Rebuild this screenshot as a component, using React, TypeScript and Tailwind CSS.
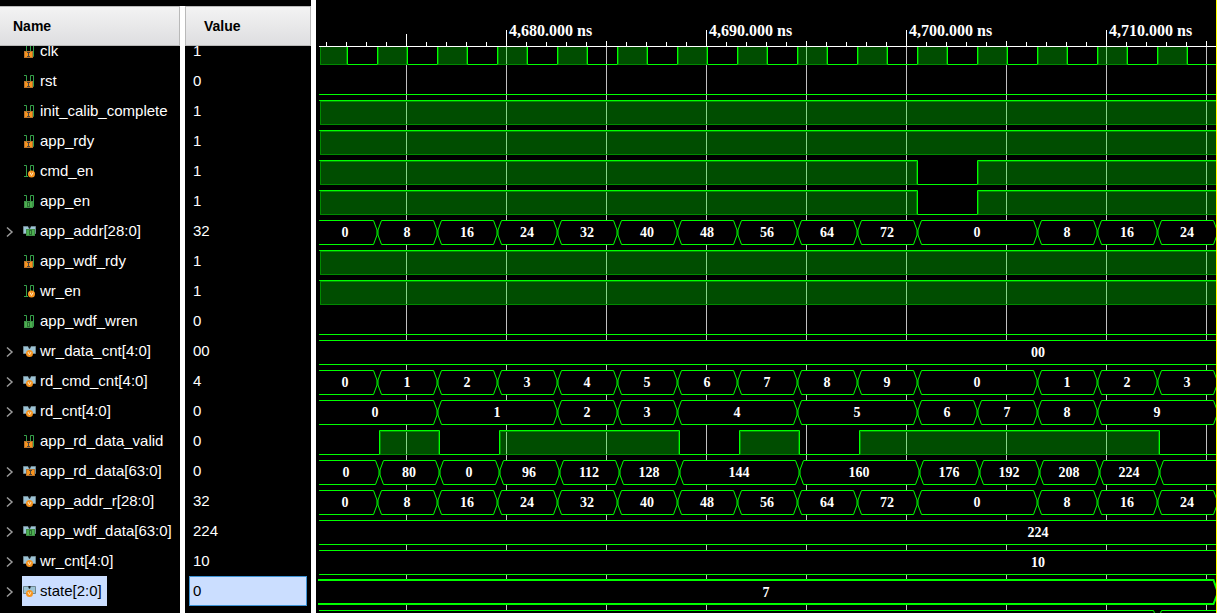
import React from 'react';
import clsx from 'clsx';

type Badge = 'in' | 'out' | 'var';

type Segment = { from: number; to: number; text?: string };

type Wave =
  | { kind: 'bit'; highs: [number, number][] }
  | { kind: 'bus'; segments: Segment[] };

type Signal = {
  name: string;
  value: string;
  badge: Badge;
  wave: Wave;
  selected?: boolean;
};

const ROW = 30;
const FIRST_ROW = 36;
const AXIS_Y = 46;
const START = -3;
const END = 901;
const PAST_END = 1000;

const bit = (...highs: [number, number][]): Wave => ({ kind: 'bit', highs });

// Pairs each label with the two boundaries around it
const bus = (edges: number[], labels: string[]): Wave => ({
  kind: 'bus',
  segments: labels.map((text, i) => ({ from: edges[i], to: edges[i + 1], text })),
});

const steady = (text: string): Wave => bus([-556, 2000], [text]);

const ALWAYS_HIGH = bit([4, PAST_END]);
const ENABLE = bit([4, 601], [661, PAST_END]);
const CLOCK = bit([4, 31], ...Array.from({ length: 14 }, (_, i): [number, number] => [61 + i * 60, 91 + i * 60]));

const CMD_EDGES = [START, 61, 121, 181, 241, 301, 361, 421, 481, 541, 601, 721, 781, 841, END];
const ADDR = bus(CMD_EDGES, ['0', '8', '16', '24', '32', '40', '48', '56', '64', '72', '0', '8', '16', '24']);
const CMD_CNT = bus(CMD_EDGES, ['0', '1', '2', '3', '4', '5', '6', '7', '8', '9', '0', '1', '2', '3']);
const RD_CNT = bus(
  [START, 121, 241, 301, 361, 481, 601, 661, 721, 781, END],
  ['0', '1', '2', '3', '4', '5', '6', '7', '8', '9']
);
const RD_DATA = bus(
  [START, 63, 123, 183, 243, 303, 363, 483, 603, 663, 723, 783, 843, 2000],
  ['0', '80', '0', '96', '112', '128', '144', '160', '176', '192', '208', '224', '']
);

const signals: Signal[] = [
  { name: 'clk', value: '1', badge: 'in', wave: CLOCK },
  { name: 'rst', value: '0', badge: 'in', wave: bit() },
  { name: 'init_calib_complete', value: '1', badge: 'in', wave: ALWAYS_HIGH },
  { name: 'app_rdy', value: '1', badge: 'in', wave: ALWAYS_HIGH },
  { name: 'cmd_en', value: '1', badge: 'var', wave: ENABLE },
  { name: 'app_en', value: '1', badge: 'out', wave: ENABLE },
  { name: 'app_addr[28:0]', value: '32', badge: 'out', wave: ADDR },
  { name: 'app_wdf_rdy', value: '1', badge: 'in', wave: ALWAYS_HIGH },
  { name: 'wr_en', value: '1', badge: 'var', wave: ALWAYS_HIGH },
  { name: 'app_wdf_wren', value: '0', badge: 'out', wave: bit() },
  { name: 'wr_data_cnt[4:0]', value: '00', badge: 'var', wave: steady('00') },
  { name: 'rd_cmd_cnt[4:0]', value: '4', badge: 'var', wave: CMD_CNT },
  { name: 'rd_cnt[4:0]', value: '0', badge: 'var', wave: RD_CNT },
  { name: 'app_rd_data_valid', value: '0', badge: 'in', wave: bit([63, 123], [183, 363], [423, 483], [543, 843]) },
  { name: 'app_rd_data[63:0]', value: '0', badge: 'in', wave: RD_DATA },
  { name: 'app_addr_r[28:0]', value: '32', badge: 'var', wave: ADDR },
  { name: 'app_wdf_data[63:0]', value: '224', badge: 'out', wave: steady('224') },
  { name: 'wr_cnt[4:0]', value: '10', badge: 'var', wave: steady('10') },
  { name: 'state[2:0]', value: '0', badge: 'var', wave: bus([-1, END], ['7']), selected: true },
];

// Only the top edge of this row is in view
const NEXT_ROW: Segment[] = [
  { from: -400, to: 841 },
  { from: 841, to: 2000 },
];

const SignalIcon: React.FC<{ isBus: boolean; badge: Badge }> = ({ isBus, badge }) => {
  // Top left corner of the square badge
  const x = isBus ? 3 : 1;
  const y = isBus ? 5 : 7;
  return (
    <svg width="14" height="14" viewBox="0 0 14 14" className="shrink-0" aria-hidden="true">
      {isBus ? (
        <>
          <path d="M0.5 2.5H5L6.5 5L8 2.5H12.5V9.5H0.5Z" fill="#9cc3d5" stroke="#6f8791" />
          <path d="M5 2H8L6.5 5Z" fill="#10181c" />
        </>
      ) : (
        <path d="M1 1.5H3.5V12.5M1 12.5H5M7.5 1.5H10.5V12.5H7.5Z" fill="none" stroke="#35a049" />
      )}
      {badge === 'var' && (
        <>
          <circle cx={isBus ? 6.5 : 8.5} cy={isBus ? 9.5 : 10} r="3.5" fill="#f7941e" />
          <path d={isBus ? 'M5 8l1.5 3L8 8' : 'M7 8.5l1.5 3 1.5-3'} fill="none" stroke="#ffe2b8" />
        </>
      )}
      {badge === 'in' && (
        <>
          <rect x={x} y={y} width="9" height="7" fill="#b8752f" />
          <rect x={x + 1} y={y + 1} width="7" height="5" fill="#f7941e" />
          <path d={`M${x + 3} ${y + 1.5}h3M${x + 4.5} ${y + 1}v5M${x + 3} ${y + 5.5}h3`} fill="none" stroke="#4f4338" />
        </>
      )}
      {badge === 'out' && (
        <>
          <rect x={x} y={y} width="9" height="7" fill="#3f8f46" />
          <rect x={x + 1} y={y + 1} width="7" height="5" fill="#4caf50" />
          <rect x={x + 3.5} y={y + 1.5} width="2" height="4" fill="none" stroke="#2a6a31" />
        </>
      )}
    </svg>
  );
};

const NameRow: React.FC<{ signal: Signal }> = ({ signal }) => {
  const isBus = signal.wave.kind === 'bus';
  return (
    <li className="flex h-[30px] items-stretch">
      <span className="flex w-[22px] shrink-0">
        {isBus && (
          <button type="button" aria-label={`Expand ${signal.name}`} className="flex w-full items-center pt-[2px] pl-[6px]">
            <svg width="8" height="12" viewBox="0 0 8 12" fill="none" stroke="#9a9a9a" strokeWidth="1.5">
              <path d="M1 1.5L6 6L1 10.5" />
            </svg>
          </button>
        )}
      </span>
      <span
        className={clsx(
          'flex items-center gap-[3px] pr-[5px] pl-px whitespace-nowrap',
          signal.selected ? 'bg-[#cbdeff] text-black' : 'text-white'
        )}
      >
        <SignalIcon isBus={isBus} badge={signal.badge} />
        {signal.name}
      </span>
    </li>
  );
};

const ValueRow: React.FC<{ signal: Signal }> = ({ signal }) => (
  <li
    className={clsx(
      'mx-1 flex h-[30px] items-center border pl-[3px]',
      signal.selected ? 'border-[#3d92d4] bg-[#cbdeff] text-black' : 'border-transparent text-white'
    )}
  >
    {signal.value}
  </li>
);

const Column: React.FC<{ title: string; className: string; titleClass: string; children: React.ReactNode }> = ({
  title,
  className,
  titleClass,
  children,
}) => (
  <section className={clsx('flex shrink-0 flex-col', className)}>
    <h2
      className={clsx(
        'z-10 flex h-10 shrink-0 items-center border-t border-r border-b border-[#b9b9b9] bg-linear-to-b from-[#f3f3f3] to-[#dedee0] text-[14px] font-bold text-black',
        titleClass
      )}
    >
      {title}
    </h2>
    <ul className="-mt-[10px] text-[15px] leading-[18px]">{children}</ul>
  </section>
);

const BitWave: React.FC<{ highs: [number, number][] }> = ({ highs }) => {
  let line = 'M3 28.5';
  highs.forEach(([from, to]) => {
    line += from === 4 ? 'M3 4.5' : `H${from + 0.5}V4.5`;
    line += `H${to + 0.5}V28.5`;
  });
  line += `H${PAST_END}`;
  return (
    <>
      {highs.map(([from, to]) => {
        const left = from === 4 ? 4 : from + 1;
        return (
          <rect
            key={from}
            x={left + 0.5}
            y="5.5"
            width={to - left - 1}
            height="23"
            fill="#00ff00"
            fillOpacity="0.3"
            stroke="#008a00"
          />
        );
      })}
      <path d={line} fill="none" stroke="#00ff00" />
    </>
  );
};

const BusWave: React.FC<{ segments: Segment[]; thick?: boolean }> = ({ segments, thick }) => (
  <>
    {segments.map(({ from, to, text }) => {
      const open = from < 0;
      const left = open ? (thick ? 2 : 3) : from;
      const top = thick ? 4 : 4.5;
      const bottom = thick ? 28 : 28.5;
      const right = `H${to - 3.5}L${to} 14V19L${to - 3.5} ${bottom}`;
      const d = open
        ? `M${left} ${top}${right}H${left}`
        : `M${left + 4.5} ${top}${right}H${left + 4.5}L${left + 1} 19V14Z`;
      return (
        <g key={from}>
          <path d={d} fill="#000000" stroke="#00ff00" strokeWidth={thick ? 2 : 1} />
          {text && (
            <text x={(from + to) / 2} y="21" textAnchor="middle" className="fill-white text-[14px] font-bold">
              {text}
            </text>
          )}
        </g>
      );
    })}
  </>
);

const WavePanel: React.FC = () => {
  const ticks = Array.from({ length: 45 }, (_, i) => 10 + i * 20);
  const gridLines = ticks.filter((x) => (x - 90) % 100 === 0);
  const labels = ['4,680.000 ns', '4,690.000 ns', '4,700.000 ns', '4,710.000 ns'];

  const tickTop = (x: number) => {
    if (x === 90) return 34;
    if ((x - 190) % 200 === 0) return 30;
    return (x - 90) % 100 === 0 ? 41 : 42;
  };

  return (
    <section className="relative min-w-0 flex-1 overflow-hidden bg-black">
      <svg width="100%" height="640" className="block font-['Liberation_Serif',serif]" role="img" aria-label="Waveforms">
        {gridLines.map((x) => (
          <rect key={x} x={x} y={AXIS_Y} width="1" height="594" fill="#c0c0c0" />
        ))}

        {signals.map(({ name, wave, selected }, i) => (
          <g key={name} transform={`translate(0 ${FIRST_ROW + i * ROW})`}>
            {wave.kind === 'bit' ? (
              <BitWave highs={wave.highs} />
            ) : (
              <BusWave segments={wave.segments} thick={selected} />
            )}
          </g>
        ))}
        <g transform={`translate(0 ${FIRST_ROW + signals.length * ROW})`}>
          <BusWave segments={NEXT_ROW} />
        </g>

        {/* Time ruler, drawn over the first row */}
        <rect width="100%" height={AXIS_Y} fill="#000000" />
        <rect x="3" y={AXIS_Y} width="100%" height="1" fill="#ffffff" />
        {ticks.map((x) => (
          <rect key={x} x={x} y={tickTop(x)} width="1" height={AXIS_Y - tickTop(x)} fill="#ffffff" />
        ))}
        {labels.map((label, i) => (
          <text key={label} x={193 + i * 200} y="36" className="fill-white text-[16px] font-bold">
            {label}
          </text>
        ))}
      </svg>
      {/* Cursor */}
      <div className="absolute inset-y-0 right-0 w-px bg-[#ffff00]" />
    </section>
  );
};

const App: React.FC = () => {
  return (
    <main className="flex h-screen w-full overflow-hidden bg-black font-['Liberation_Sans',Arial,sans-serif]">
      <div className="flex shrink-0 pt-[6px]">
        <Column title="Name" className="w-[180px]" titleClass="pl-[13px]">
          {signals.map((signal) => (
            <NameRow key={signal.name} signal={signal} />
          ))}
        </Column>
        <div className="w-[5px] bg-white" />
        <Column title="Value" className="w-[126px]" titleClass="border-l pl-[18px]">
          {signals.map((signal) => (
            <ValueRow key={signal.name} signal={signal} />
          ))}
        </Column>
      </div>
      <div className="w-[5px] shrink-0 bg-white" />
      <WavePanel />
    </main>
  );
};

export default App;
